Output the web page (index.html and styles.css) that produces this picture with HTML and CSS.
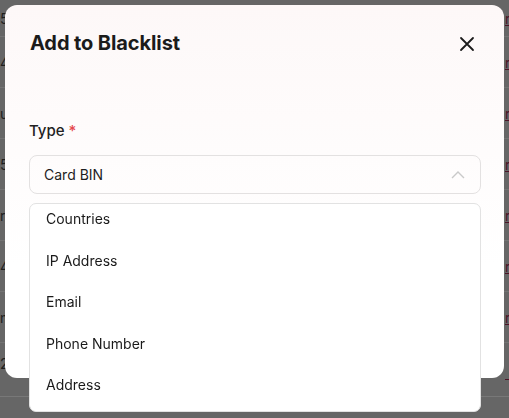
FILE: index.html
```
<!DOCTYPE html>
<html lang="en">
<head>
    <meta charset="utf-8">
    <meta name="viewport" content="width=device-width, initial-scale=1.0">
    <title>Add to Blacklist</title>
    <link rel="stylesheet" href="styles.css">
</head>
<body>
    <!-- table behind the overlay -->
    <main class="tabel">
        <div class="raekke forste"><span class="celle">5r</span><a class="link">r</a></div>
        <div class="raekke"><span class="celle">4</span><a class="link">r</a></div>
        <div class="raekke"><span class="celle">u</span><a class="link">r</a></div>
        <div class="raekke"><span class="celle">5</span><a class="link">r</a></div>
        <div class="raekke"><span class="celle">r</span><a class="link">r</a></div>
        <div class="raekke"><span class="celle">4</span><a class="link">r</a></div>
        <div class="raekke"><span class="celle">m</span><a class="link">r</a></div>
        <div class="raekke sidste"><span class="celle">25</span><span class="streg"></span></div>
    </main>

    <div class="modal">
        <header class="modalTop">
            <h1>Add to Blacklist</h1>
            <button class="luk" aria-label="Close">
                <svg width="16" height="16" viewBox="0 0 16 16" fill="none" stroke="#1b1b1b" stroke-width="1.8" stroke-linecap="round">
                    <path d="M2 2 L14 14 M14 2 L2 14"/>
                </svg>
            </button>
        </header>

        <label class="felt">Type <span class="krav">*</span></label>

        <div class="vaelger">
            <div class="valgt">
                <span>Card BIN</span>
                <svg width="14" height="8" viewBox="0 0 14 8" fill="none" stroke="#c9c9c9" stroke-width="1.4">
                    <path d="M1 7 L7 1 L13 7"/>
                </svg>
            </div>
            <ul class="liste">
                <li>Countries</li>
                <li>IP Address</li>
                <li>Email</li>
                <li>Phone Number</li>
                <li>Address</li>
            </ul>
        </div>
    </div>
</body>
</html>
```

FILE: styles.css
```
        body {
            margin: 0;
            background-color: #666666;
            font-family: 'Inter', 'Noto Sans', sans-serif;
            overflow: hidden;
            height: 418px;
        }

        .tabel {
            width: 509px;
        }

        .raekke {
            display: grid;
            grid-template-columns: 505px 4px;
            align-items: center;
            height: 50px;
            border-bottom: 1px solid #737373;
            font-size: 14px;
        }

        .forste {
            height: 36px;
        }

        .sidste {
            height: 54px;
            align-items: start;
            padding-top: 12px;
            box-sizing: border-box;
            border-bottom-color: #787878;
        }

        .streg {
            margin-top: 24px;
            border-top: 1px solid #4a1426;
        }

        .celle {
            color: #1e1e1e;
        }

        .link {
            color: #4a1426;
            text-decoration: underline;
            overflow: hidden;
        }

        /* the dialog */
        .modal {
            position: fixed;
            left: 5px;
            top: 5px;
            width: 499px;
            height: 373px;
            box-sizing: border-box;
            padding: 0 23px 0 24px;
            border-radius: 12px;
            background: linear-gradient(#fdf8f8, #ffffff 70%);
        }

        .modalTop {
            display: flex;
            justify-content: space-between;
            align-items: center;
            padding-top: 24px;
        }

        h1 {
            margin: 0 0 0 1px;
            font-size: 20px;
            line-height: 28px;
            font-weight: 700;
            color: #1b1b1b;
            letter-spacing: -0.1px;
        }

        .luk {
            border: none;
            background: none;
            padding: 0;
            width: 16px;
            height: 16px;
            margin: 2px 6px 0 0;
        }

        .felt {
            display: block;
            margin-top: 64px;
            font-size: 15px;
            line-height: 20px;
            font-weight: 500;
            color: #222222;
        }

        .krav {
            color: #e5484d;
        }

        .vaelger {
            position: relative;
            margin-top: 14px;
        }

        .valgt {
            display: flex;
            justify-content: space-between;
            align-items: center;
            height: 39px;
            box-sizing: border-box;
            padding: 0 15px 0 14px;
            border: 1px solid #e3e1e1;
            border-radius: 8px;
            font-size: 14px;
            color: #1e1e1e;
        }

        .liste {
            position: absolute;
            left: 0;
            right: 0;
            top: 48px;
            height: 209px;
            box-sizing: border-box;
            margin: 0;
            padding: 0;
            list-style: none;
            overflow: hidden;
            background-color: white;
            border: 1px solid #e2e2e2;
            border-radius: 7px;
        }

        .liste li {
            padding: 11px 16px;
            line-height: 19.5px;
            font-size: 14px;
            color: #1a1a1a;
        }

        .liste li:first-child {
            margin-top: -6px;
        }
```
